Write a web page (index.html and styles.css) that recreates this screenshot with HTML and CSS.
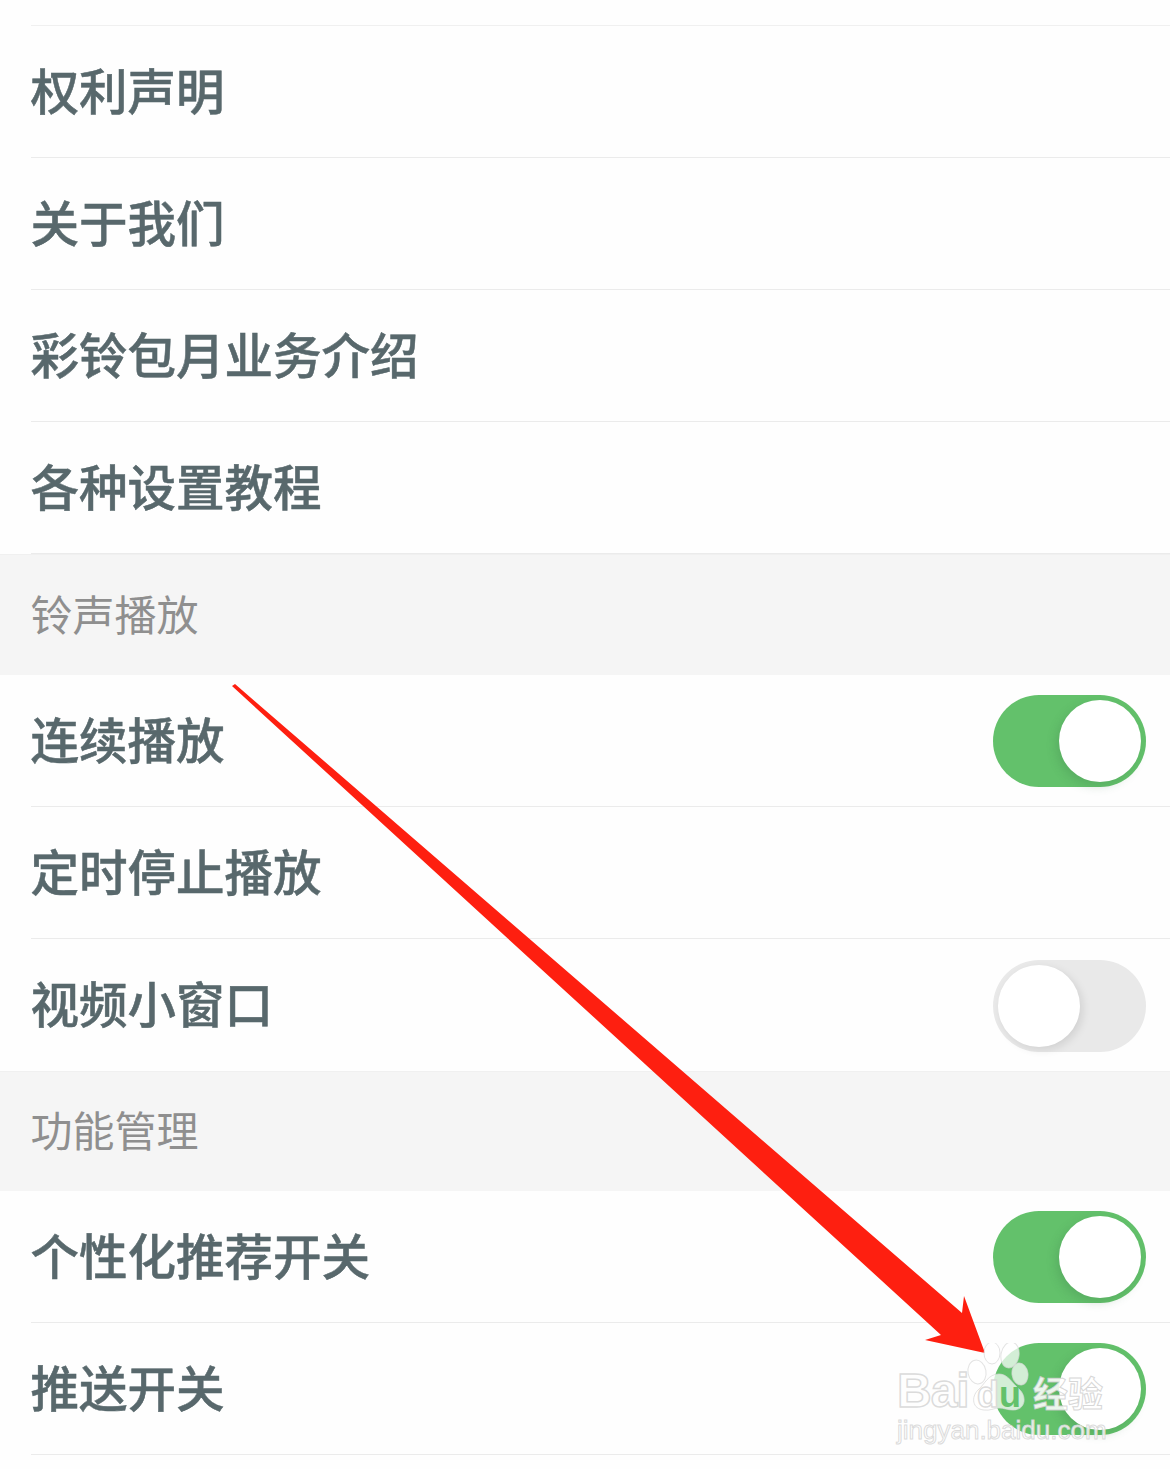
FILE: index.html
```html
<!DOCTYPE html>
<html lang="zh-CN">
<head>
    <meta charset="UTF-8">
    <meta name="viewport" content="width=device-width, initial-scale=1.0">
    <title>设置</title>
    <link rel="stylesheet" href="styles.css">
</head>
<body>
    <div class="page">
        <div class="top-gap"></div>

        <div class="row"><div class="row-inner"><span class="label">权利声明</span></div></div>
        <div class="row"><div class="row-inner"><span class="label">关于我们</span></div></div>
        <div class="row"><div class="row-inner"><span class="label">彩铃包月业务介绍</span></div></div>
        <div class="row"><div class="row-inner"><span class="label">各种设置教程</span></div></div>

        <div class="section section-tall">铃声播放</div>

        <div class="row"><div class="row-inner"><span class="label">连续播放</span><span class="switch on"><span class="knob"></span></span></div></div>
        <div class="row"><div class="row-inner"><span class="label">定时停止播放</span></div></div>
        <div class="row"><div class="row-inner no-line"><span class="label">视频小窗口</span><span class="switch off"><span class="knob"></span></span></div></div>

        <div class="section">功能管理</div>

        <div class="row"><div class="row-inner"><span class="label">个性化推荐开关</span><span class="switch on"><span class="knob"></span></span></div></div>
        <div class="row"><div class="row-inner"><span class="label">推送开关</span><span class="switch on"><span class="knob"></span></span></div></div>

        <!-- red arrow drawn over the screenshot -->
        <svg class="arrow" width="1170" height="1469" viewBox="0 0 1170 1469">
            <polygon points="232,686 235,684 962,1313 964,1296 985,1353 925,1340 941,1335" fill="#fe1f10"/>
        </svg>

        <div class="watermark">
            <svg class="paw" width="80" height="80" viewBox="0 0 80 80">
                <ellipse cx="11" cy="29" rx="9" ry="12" transform="rotate(-10 11 29)"/>
                <ellipse cx="26" cy="10" rx="8" ry="11"/>
                <ellipse cx="44" cy="12" rx="9" ry="13" transform="rotate(10 44 12)"/>
                <ellipse cx="54" cy="31" rx="8" ry="11" transform="rotate(-8 54 31)"/>
                <path d="M33 31c9 0 13 9 20 15 8 7 7 21-6 21-6 0-9-2-14-2-5 0-9 3-15 2C6 66 5 54 12 47c7-6 10-16 21-16z"/>
            </svg>
            <div class="wm-line">
                <span class="wm-bai">Bai</span>
                <span class="wm-du"><span class="wm-d">d</span><span class="wm-u">u</span></span>
                <span class="wm-jy">经验</span>
            </div>
            <div class="wm-url">jingyan.baidu.com</div>
        </div>
    </div>
</body>
</html>
```

FILE: styles.css
```css
html, body {
    margin: 0;
    padding: 0;
    background-color: white;
}

body {
    font-family: "Noto Sans CJK SC", "Noto Sans", sans-serif;
}

.page {
    position: relative;
    width: 1170px;
    height: 1469px;
    overflow: hidden;
    background-color: #fefefe;
}

.top-gap {
    height: 26px;
    margin-left: 31px;
    border-bottom: 1px solid #f0f0f0;
    box-sizing: border-box;
}

.row {
    height: 132px;
    padding-left: 31px;
    box-sizing: border-box;
}

.row-inner {
    height: 132px;
    padding-right: 24px;
    border-bottom: 1px solid #ebebeb;
    box-sizing: border-box;
    display: flex;
    align-items: center;
    justify-content: space-between;
}

.no-line {
    border-bottom: none;
}

.label {
    margin-left: -0.5px;
    margin-bottom: 5px;
    font-size: 48.5px;
    font-weight: 500;
    color: #58686c;
    line-height: 1;
    -webkit-text-stroke: 0.5px #58686c;
}

.section {
    height: 120px;
    padding-left: 30.5px;
    padding-bottom: 6px;
    box-sizing: border-box;
    display: flex;
    align-items: center;
    font-size: 42px;
    color: #8f8f8f;
    background-color: #f5f5f5;
    border-top: 1px solid #f0f0f0;
}

.section-tall {
    height: 121px;
}

.switch {
    width: 153px;
    height: 92px;
    margin-top: 1px;
    border-radius: 46px;
    box-sizing: border-box;
    display: flex;
    align-items: center;
    padding: 0 5px;
    flex-shrink: 0;
}

.switch.on {
    background-color: #63c16b;
    justify-content: flex-end;
}

.switch.off {
    background-color: #e9e9e9;
    justify-content: flex-start;
}

.knob {
    width: 82px;
    height: 82px;
    border-radius: 50%;
    background-color: white;
}

.switch.on .knob {
    box-shadow: -3px 4px 10px rgba(60, 120, 70, 0.25);
}

.switch.off .knob {
    box-shadow: 3px 3px 8px rgba(0, 0, 0, 0.1);
}

.arrow {
    position: absolute;
    left: 0;
    top: 0;
}

/* watermark sits on top of the last row */
.watermark {
    position: absolute;
    left: 896px;
    top: 1343px;
    width: 220px;
    height: 105px;
}

.paw {
    position: absolute;
    left: 70px;
    top: 0;
    fill: rgba(255, 255, 255, 0.72);
    stroke: rgba(215, 215, 215, 0.7);
    stroke-width: 1;
}

.wm-line {
    position: absolute;
    left: 1px;
    top: 20px;
    display: flex;
    align-items: baseline;
    font-family: "Liberation Sans", sans-serif;
    font-size: 48px;
    font-weight: bold;
    line-height: 56px;
    white-space: nowrap;
    color: rgba(255, 255, 255, 0.9);
    -webkit-text-stroke: 1.5px rgba(215, 215, 215, 0.9);
}

.wm-bai {
    width: 80px;
    letter-spacing: -1px;
}

.wm-du {
    width: 56px;
    font-size: 36px;
}

.wm-u {
    color: #63c16b;
    -webkit-text-stroke: 0;
}

.wm-jy {
    font-family: "Noto Sans CJK SC", sans-serif;
    font-size: 35px;
    font-weight: 700;
    -webkit-text-stroke: 1px rgba(205, 205, 205, 0.8);
}

.wm-url {
    position: absolute;
    left: 1px;
    top: 71px;
    font-family: "Liberation Sans", sans-serif;
    font-size: 26px;
    line-height: 32px;
    white-space: nowrap;
    color: rgba(255, 255, 255, 0.85);
    -webkit-text-stroke: 1px rgba(215, 215, 215, 0.9);
}
```
